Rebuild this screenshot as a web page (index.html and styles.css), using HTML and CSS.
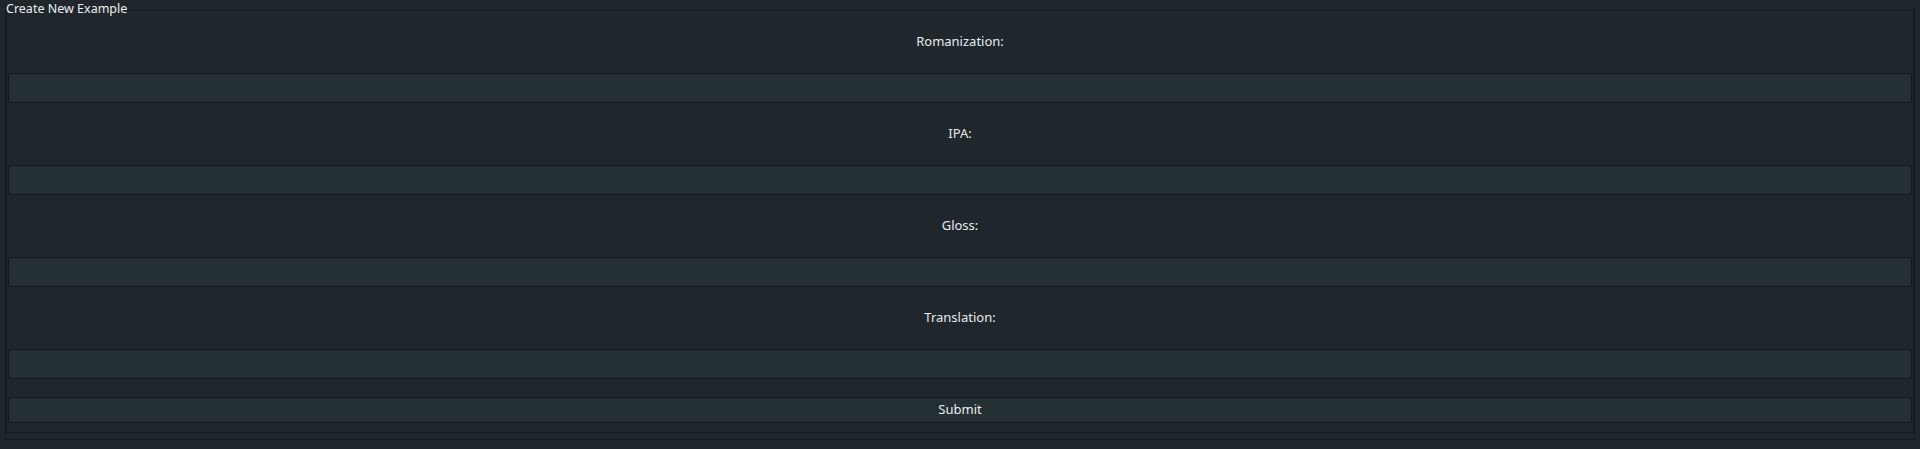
FILE: index.html
```html
<!DOCTYPE html>
<html>
<head>
<meta charset="utf-8">
<link rel="stylesheet" href="styles.css">
</head>
<body>
<fieldset class="group">
  <legend class="group-title">Create New Example</legend>
  <div class="panel">
    <div class="row"><label class="label">Romanization:</label><input class="field" type="text"></div>
    <div class="row"><label class="label">IPA:</label><input class="field" type="text"></div>
    <div class="row"><label class="label">Gloss:</label><input class="field" type="text"></div>
    <div class="row"><label class="label">Translation:</label><input class="field" type="text"></div>
    <button class="submit" type="button">Submit</button>
  </div>
</fieldset>
</body>
</html>
```

FILE: styles.css
```css
html, body {
  margin: 0;
  padding: 0;
  background: #1f272d;
  height: 449px;
  overflow: hidden;
}
body {
  font-family: "Noto Sans", "Open Sans", sans-serif;
  font-size: 12.5px;
  color: #e8eaeb;
}
.group {
  margin: 0 5px;
  padding: 0 0 6px 0;
  border: 1px solid #141a1d;
  min-width: 0;
}
.group-title {
  padding: 0;
  margin: 0;
  height: 20px;
  line-height: 18px;
  color: #eceeef;
}
.panel {
  border: 1px solid #141a1d;
  border-top: none;
  padding: 1px 1px 9px 1px;
  display: flex;
  flex-direction: column;
  margin-top: -10px;
}
.row {
  display: flex;
  flex-direction: column;
}
.label {
  box-sizing: border-box;
  height: 62px;
  padding-bottom: 2px;
  display: flex;
  align-items: center;
  justify-content: center;
  font-size: 13px;
}
.field {
  box-sizing: border-box;
  height: 30px;
  margin: 0;
  background: #243034;
  border: 1px solid #12181b;
  border-radius: 2px;
  color: #e8eaeb;
  font: inherit;
  outline: none;
}
.submit {
  box-sizing: border-box;
  margin-top: 18px;
  height: 26px;
  background: #243034;
  border: 1px solid #12181b;
  border-radius: 2px;
  color: #eceeef;
  font: inherit;
  font-size: 13px;
  padding: 0 0 2px 0;
}
```
